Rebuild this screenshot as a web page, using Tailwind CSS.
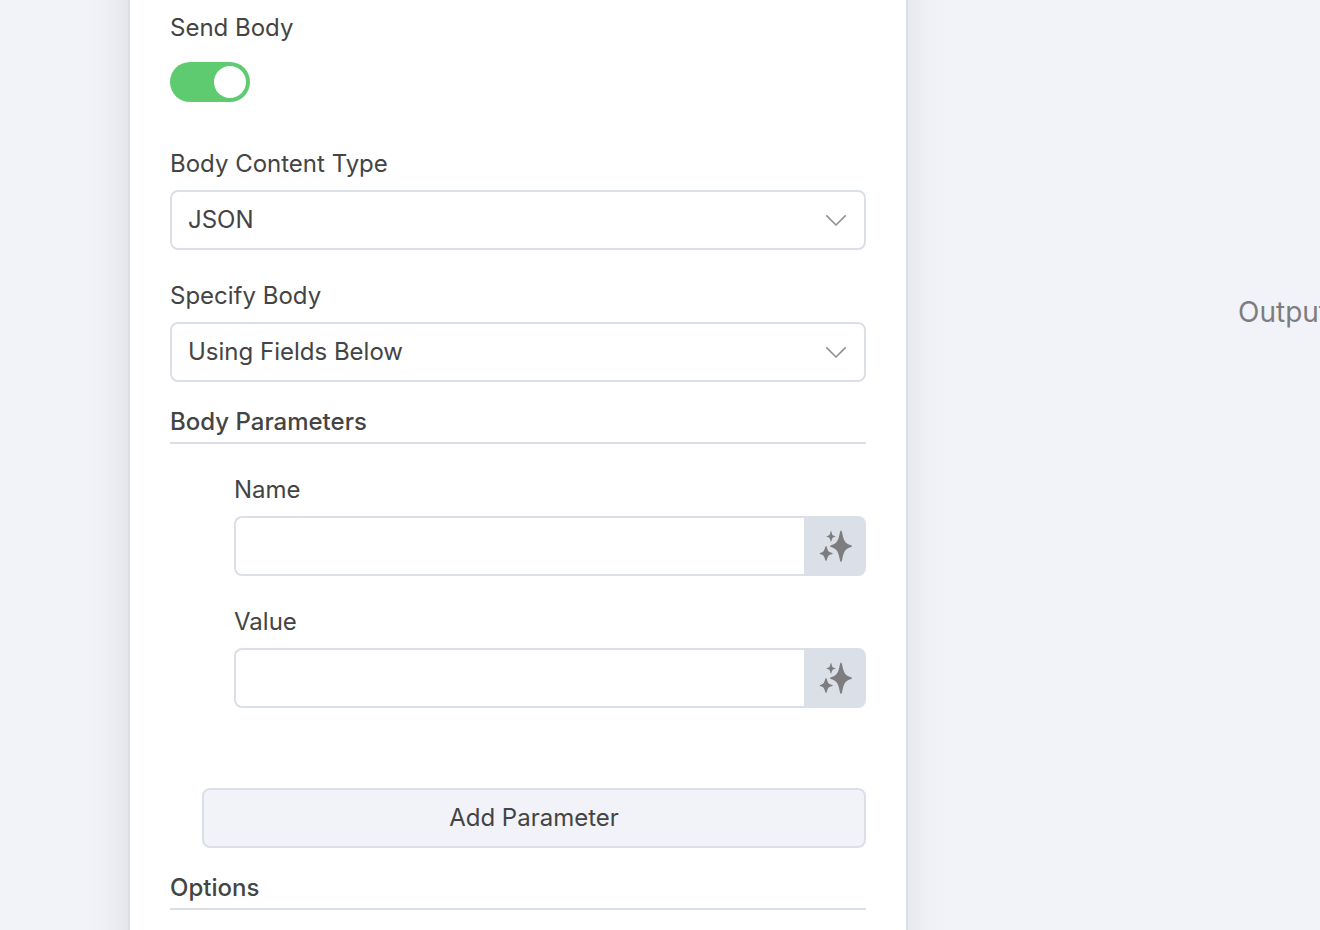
<!DOCTYPE html>
<html lang="en">
<head>
    <meta charset="UTF-8">
    <meta name="viewport" content="width=device-width, initial-scale=1.0">
    <title>HTTP Request</title>
    <script src="https://cdn.jsdelivr.net/npm/@tailwindcss/browser@4"></script>
</head>
<body class="bg-[#f1f3f8] font-[Inter,sans-serif] text-2xl text-[#444444] overflow-x-hidden">
    <svg class="hidden">
        <symbol id="sparkles" viewBox="0 0 34 34">
            <path d="M23 1.500C23.600 1.500 24 3 24.400 5C25.800 11.500 27 13.800 31 15.600C33 16.400 34 16.700 34 17.200C34 17.700 33 18 31 18.800C27 20.600 25.800 23 24.400 29.500C24 31.500 23.600 33 23 33C22.400 33 22 31.500 21.600 29.500C20.200 23 19 20.600 15 18.800C13 18 12 17.700 12 17.200C12 16.700 13 16.400 15 15.600C19 13.800 20.200 11.500 21.600 5C22 3 22.400 1.500 23 1.500Z"/>
            <path d="M8 17C8.500 17 8.800 18 9.200 19.500C10 22 10.700 22.700 12.700 23.500C14 23.900 14.800 24.100 14.800 24.500C14.800 24.900 14 25.100 12.700 25.500C10.700 26.300 10 27 9.200 29.500C8.800 31 8.500 32 8 32C7.500 32 7.200 31 6.800 29.500C6 27 5.300 26.300 3.500 25.500C2.300 25.100 1.700 24.900 1.700 24.500C1.700 24.100 2.300 23.900 3.500 23.500C5.300 22.700 6 22 6.800 19.500C7.200 18 7.500 17 8 17Z"/>
            <path d="M13 2C13.600 2 13.700 5.500 14.800 6.300C15.400 6.900 17.600 7 17.600 7.500C17.600 8 15.400 8.100 14.800 8.700C13.700 9.500 13.600 12.600 13 12.600C12.400 12.600 12.300 9.500 11.200 8.700C10.600 8.100 8.400 8 8.400 7.500C8.400 7 10.600 6.900 11.200 6.300C12.300 5.500 12.400 2 13 2Z"/>
        </symbol>
    </svg>

    <div class="grid grid-cols-[128px_minmax(0,780px)_1fr] min-h-screen overflow-hidden">
        <div class="flex justify-end">
            <div class="w-10 bg-linear-to-l from-black/5 via-black/2 to-transparent"></div>
        </div>

        <!-- Node settings -->
        <main class="bg-white border-x-2 border-[#dbdfe7] px-10 pt-3 pb-5">
            <form>
                <div>
                    <label for="sendBody" class="block leading-8">Send Body</label>
                    <input type="checkbox" role="switch" id="sendBody" checked class="appearance-none block mt-[18px] w-20 h-10 rounded-full bg-gray-300 checked:bg-[#5fcb71] p-1 before:block before:size-8 before:rounded-full before:bg-white checked:before:ml-auto">
                </div>

                <div class="mt-[46px]">
                    <label for="contentType" class="block leading-8">Body Content Type</label>
                    <div class="relative mt-[10px]">
                        <select id="contentType" class="appearance-none block w-full h-[60px] px-4 bg-white border-2 border-[#dbdfe7] rounded-lg">
                            <option>JSON</option>
                        </select>
                        <svg class="absolute right-[19px] top-6 w-[22px] h-3 pointer-events-none" viewBox="0 0 22 12" fill="none" stroke="#909399" stroke-width="1.700" stroke-linecap="round" stroke-linejoin="round"><path d="M1.800 1.800L11 11L20.200 1.800"/></svg>
                    </div>
                </div>

                <div class="mt-[30px]">
                    <label for="specifyBody" class="block leading-8">Specify Body</label>
                    <div class="relative mt-[10px]">
                        <select id="specifyBody" class="appearance-none block w-full h-[60px] px-4 bg-white border-2 border-[#dbdfe7] rounded-lg">
                            <option>Using Fields Below</option>
                        </select>
                        <svg class="absolute right-[19px] top-6 w-[22px] h-3 pointer-events-none" viewBox="0 0 22 12" fill="none" stroke="#909399" stroke-width="1.700" stroke-linecap="round" stroke-linejoin="round"><path d="M1.800 1.800L11 11L20.200 1.800"/></svg>
                    </div>
                </div>

                <h2 class="mt-6 pb-1 leading-8 font-medium border-b-2 border-[#dbdfe7]">Body Parameters</h2>

                <div class="mt-[30px] pl-16">
                    <label for="paramName" class="block leading-8">Name</label>
                    <div class="flex mt-[10px] h-[60px]">
                        <input type="text" id="paramName" class="flex-1 min-w-0 px-4 bg-white border-2 border-r-0 border-[#dbdfe7] rounded-l-lg">
                        <button type="button" aria-label="Generate name" class="w-[62px] flex items-center justify-center bg-[#dbdfe7] rounded-r-lg">
                            <svg class="size-[34px]" fill="#7d7d7f"><use href="#sparkles"/></svg>
                        </button>
                    </div>
                </div>

                <div class="mt-[30px] pl-16">
                    <label for="paramValue" class="block leading-8">Value</label>
                    <div class="flex mt-[10px] h-[60px]">
                        <input type="text" id="paramValue" class="flex-1 min-w-0 px-4 bg-white border-2 border-r-0 border-[#dbdfe7] rounded-l-lg">
                        <button type="button" aria-label="Generate value" class="w-[62px] flex items-center justify-center bg-[#dbdfe7] rounded-r-lg">
                            <svg class="size-[34px]" fill="#7d7d7f"><use href="#sparkles"/></svg>
                        </button>
                    </div>
                </div>

                <div class="mt-20 pl-8">
                    <button type="button" class="block w-full h-[60px] bg-[#f1f3f8] border-2 border-[#dbdfe7] rounded-lg">Add Parameter</button>
                </div>

                <h2 class="mt-6 pb-1 leading-8 font-medium border-b-2 border-[#dbdfe7]">Options</h2>
            </form>
        </main>

        <!-- Output panel -->
        <aside class="flex min-w-0 overflow-hidden">
            <div class="w-10 shrink-0 bg-linear-to-r from-black/4 via-black/1 to-transparent"></div>
            <p class="pt-[294px] pl-[290px] text-[28px] leading-9 text-[#7d7d80] whitespace-nowrap">Output</p>
        </aside>
    </div>
</body>
</html>
